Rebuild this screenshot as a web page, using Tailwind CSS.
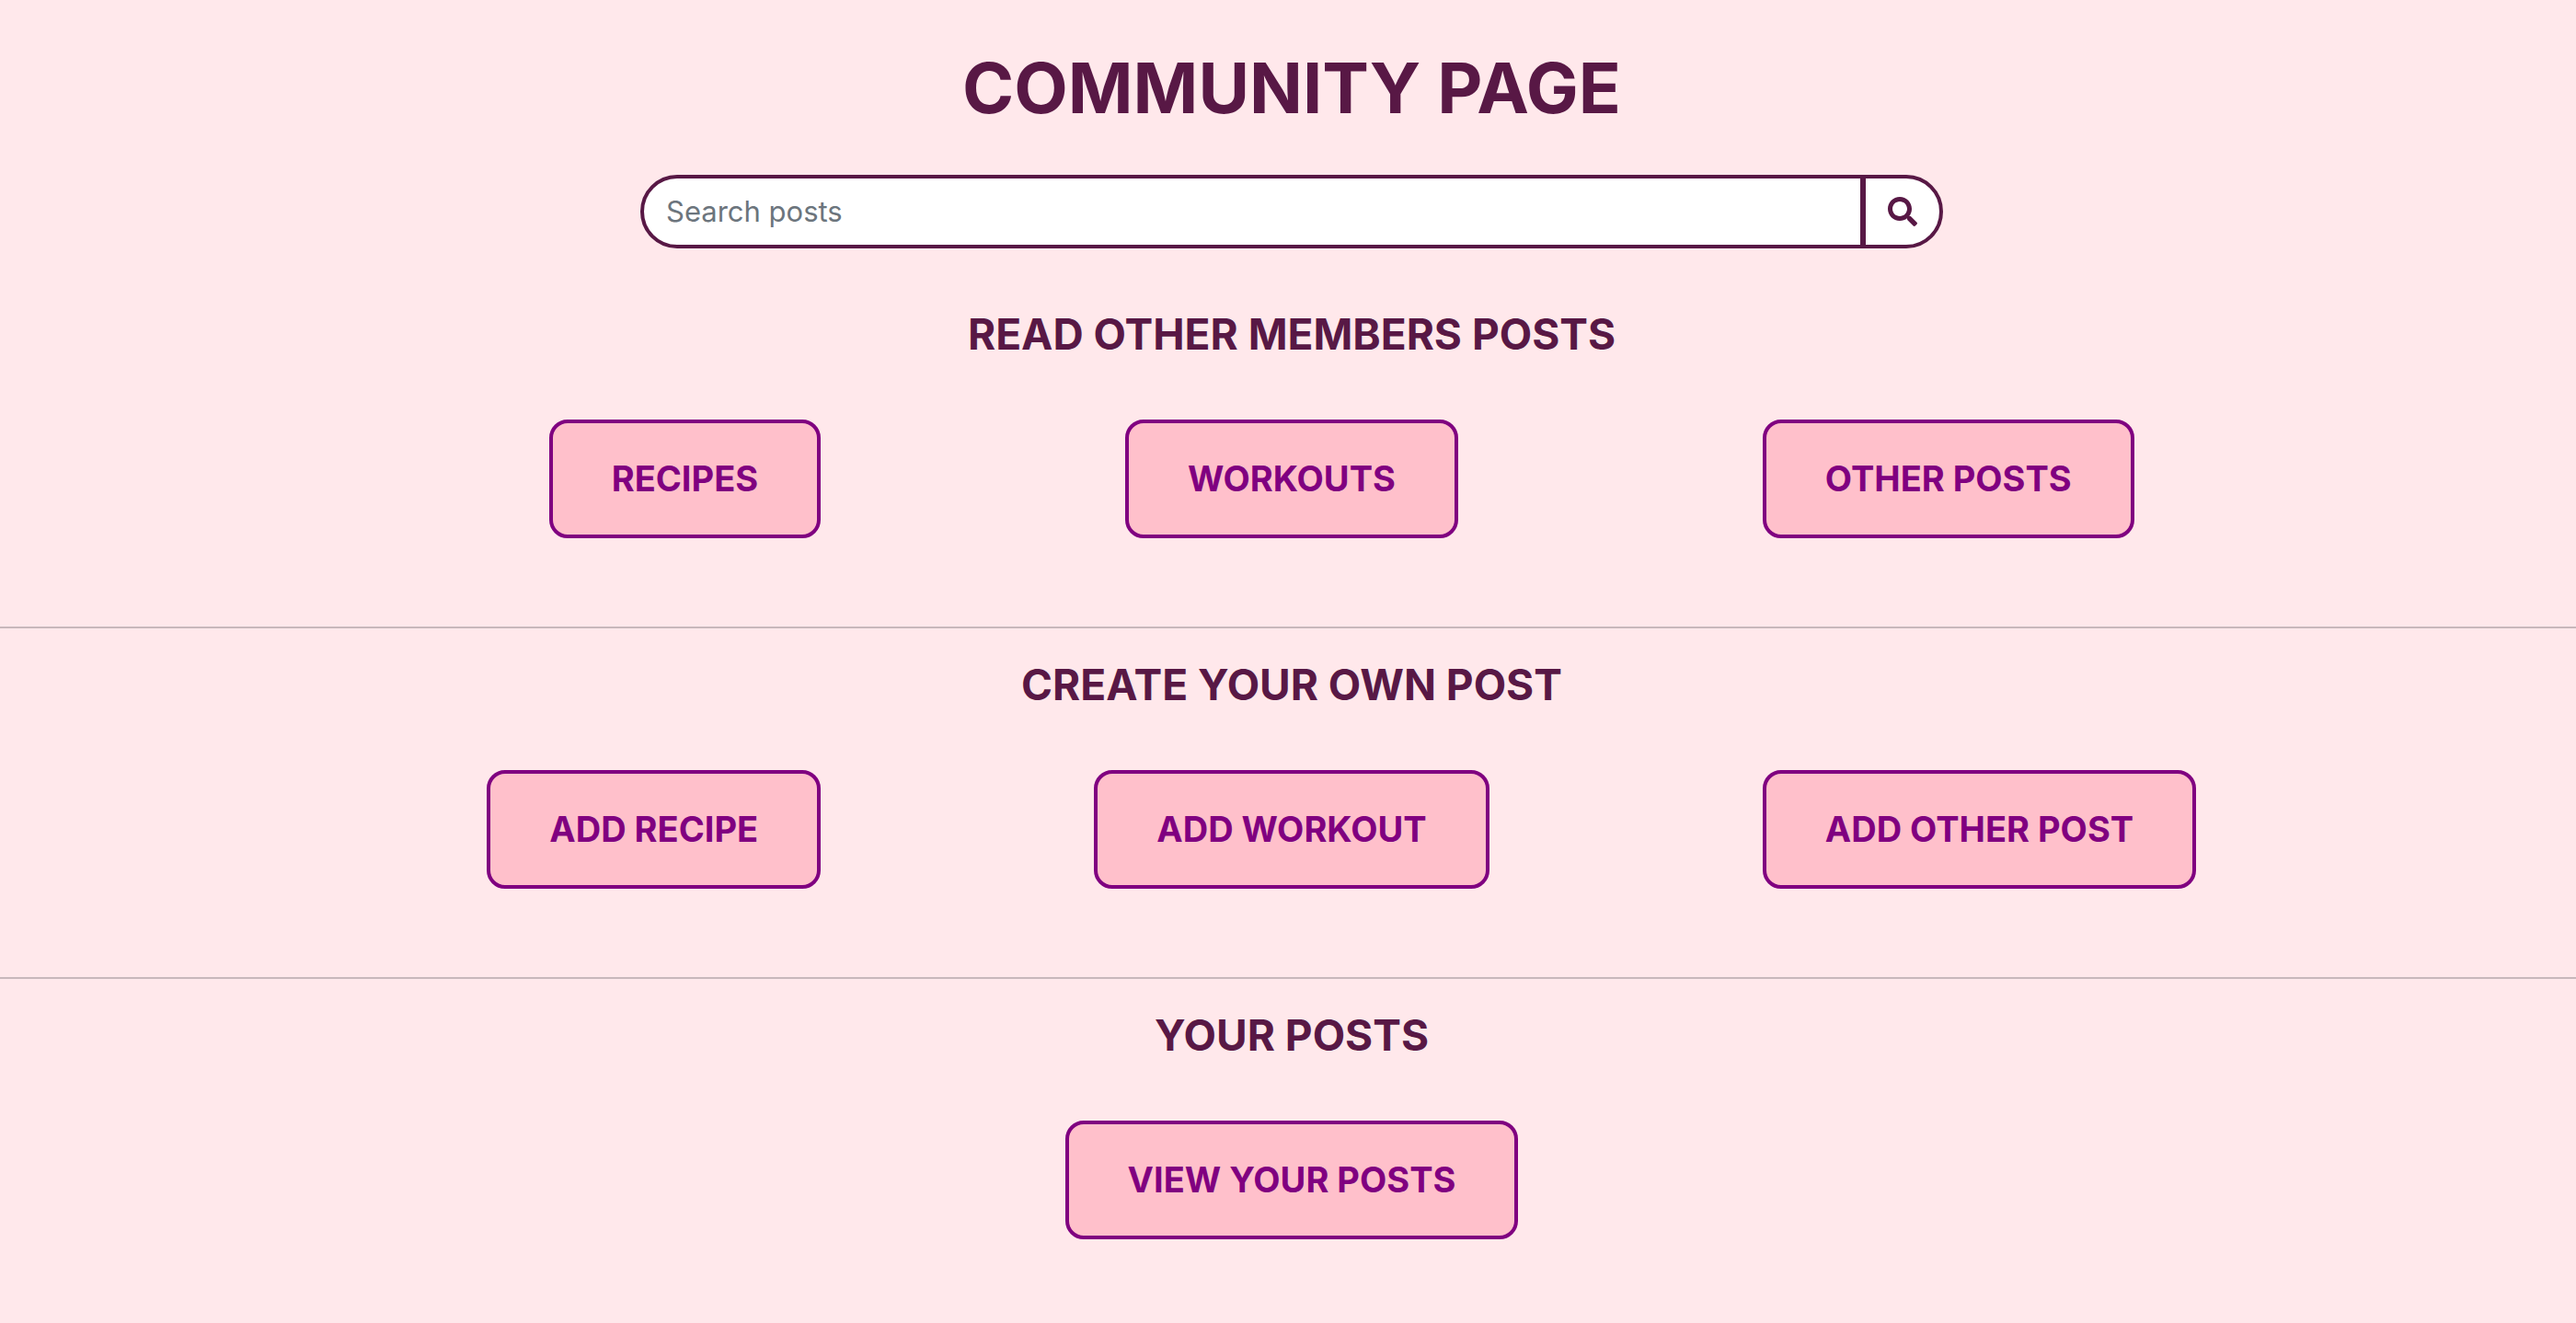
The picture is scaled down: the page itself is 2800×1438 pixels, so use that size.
<!DOCTYPE html>
<html lang="en">
<head>
<meta charset="utf-8">
<meta name="viewport" content="width=device-width, initial-scale=1">
<title>Community Page</title>
<script src="https://cdn.jsdelivr.net/npm/@tailwindcss/browser@4"></script>
</head>
<body class="min-h-screen bg-[#ffe8eb] font-['Inter',sans-serif] text-[#581845]">
<main class="pb-20">
  <header class="pt-12 pl-2">
    <h1 class="text-center text-[76px] leading-[94px] font-bold">COMMUNITY PAGE</h1>
    <form class="mx-auto mt-12 flex h-20 w-full max-w-[1416px]" role="search">
      <input type="search" aria-label="Search posts" placeholder="Search posts" class="min-w-0 flex-1 appearance-none rounded-l-full border-4 border-[#581845] bg-white px-6 text-[31px] outline-none placeholder:text-[#6c757d]">
      <button type="submit" aria-label="Search" class="-ml-0.5 flex items-center rounded-r-full border-4 border-[#581845] bg-white px-6">
        <svg class="size-8" viewBox="0 0 512 512" fill="currentColor" aria-hidden="true"><path d="M505 442.700L405.300 343c-4.500-4.500-10.600-7-17-7H372c27.600-35.300 44-79.700 44-128C416 93.100 322.900 0 208 0S0 93.100 0 208s93.100 208 208 208c48.300 0 92.700-16.400 128-44v16.300c0 6.400 2.500 12.500 7 17l99.700 99.700c9.400 9.400 24.600 9.400 33.900 0l28.300-28.300c9.400-9.400 9.400-24.600.1-34zM208 336c-70.700 0-128-57.200-128-128 0-70.700 57.200-128 128-128 70.700 0 128 57.200 128 128 0 70.700-57.200 128-128 128z"/></svg>
      </button>
    </form>
  </header>

  <section class="pt-16 pb-24 pl-2">
    <h2 class="text-center text-[46px] leading-[58px] font-bold">READ OTHER MEMBERS POSTS</h2>
    <div class="mt-16 grid grid-cols-[19fr_22fr_19fr]">
      <button type="button" class="justify-self-end rounded-[20px] border-4 border-[purple] bg-[#ffc0cb] px-16 py-8 text-[38px] leading-[57px] font-bold text-[purple]">RECIPES</button>
      <button type="button" class="justify-self-center rounded-[20px] border-4 border-[purple] bg-[#ffc0cb] px-16 py-8 text-[38px] leading-[57px] font-bold text-[purple]">WORKOUTS</button>
      <button type="button" class="justify-self-start rounded-[20px] border-4 border-[purple] bg-[#ffc0cb] px-16 py-8 text-[38px] leading-[57px] font-bold text-[purple]">OTHER POSTS</button>
    </div>
  </section>

  <hr class="border-t-2 border-[#c8b7bb]">

  <section class="pt-8 pb-24 pl-2">
    <h2 class="text-center text-[46px] leading-[58px] font-bold">CREATE YOUR OWN POST</h2>
    <div class="mt-16 grid grid-cols-[19fr_22fr_19fr]">
      <button type="button" class="justify-self-end rounded-[20px] border-4 border-[purple] bg-[#ffc0cb] px-16 py-8 text-[38px] leading-[57px] font-bold text-[purple]">ADD RECIPE</button>
      <button type="button" class="justify-self-center rounded-[20px] border-4 border-[purple] bg-[#ffc0cb] px-16 py-8 text-[38px] leading-[57px] font-bold text-[purple]">ADD WORKOUT</button>
      <button type="button" class="justify-self-start rounded-[20px] border-4 border-[purple] bg-[#ffc0cb] px-16 py-8 text-[38px] leading-[57px] font-bold text-[purple]">ADD OTHER POST</button>
    </div>
  </section>

  <hr class="border-t-2 border-[#c8b7bb]">

  <section class="pt-8 pl-2">
    <h2 class="text-center text-[46px] leading-[58px] font-bold">YOUR POSTS</h2>
    <div class="mt-16 flex justify-center">
      <button type="button" class="rounded-[20px] border-4 border-[purple] bg-[#ffc0cb] px-16 py-8 text-[38px] leading-[57px] font-bold text-[purple]">VIEW YOUR POSTS</button>
    </div>
  </section>
</main>
</body>
</html>
